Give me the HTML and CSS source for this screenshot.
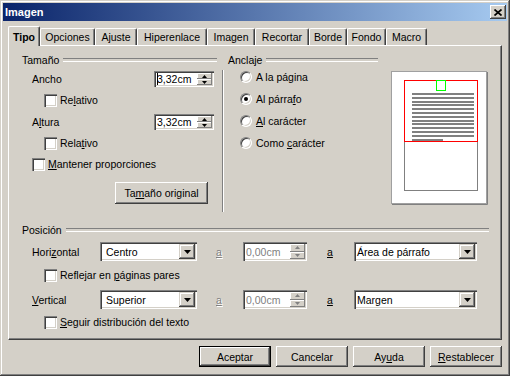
FILE: index.html
```html
<!DOCTYPE html>
<html>
<head>
    <meta charset="utf-8">
    <title>Imagen</title>
    <link rel="stylesheet" href="styles.css">
</head>
<body>
<div class="window">
    <div class="titlebar">
        <span class="title">Imagen</span>
        <button class="close-btn">
            <svg width="8" height="7" viewBox="0 0 8 7"><path d="M0.5 0.5 L7.5 6.5 M7.5 0.5 L0.5 6.5" stroke="#000" stroke-width="1.7"/></svg>
        </button>
    </div>

    <div class="content">
        <div class="tabs">
            <div class="tab active">Tipo</div>
            <div class="tab">Opciones</div>
            <div class="tab">Ajuste</div>
            <div class="tab">Hiperenlace</div>
            <div class="tab">Imagen</div>
            <div class="tab">Recortar</div>
            <div class="tab">Borde</div>
            <div class="tab">Fondo</div>
            <div class="tab">Macro</div>
        </div>

        <div class="panel">
            <div class="top-section">
                <div class="size-col">
                    <div class="header">Tamaño</div>
                    <div class="field-row first">
                        <span>Ancho</span>
                        <div class="spin">
                            <span class="spin-text"><span class="caret"></span>3,32cm</span>
                            <div class="spin-buttons">
                                <div class="spin-btn"><svg width="5" height="3"><path d="M2.5 0 L5 3 L0 3 Z" fill="#000"/></svg></div>
                                <div class="spin-btn"><svg width="5" height="3"><path d="M0 0 L5 0 L2.5 3 Z" fill="#000"/></svg></div>
                            </div>
                        </div>
                    </div>
                    <div class="check-row indent">
                        <span class="check"></span><span>Re<u>l</u>ativo</span>
                    </div>
                    <div class="field-row">
                        <span>A<u>l</u>tura</span>
                        <div class="spin">
                            <span class="spin-text">3,32cm</span>
                            <div class="spin-buttons">
                                <div class="spin-btn"><svg width="5" height="3"><path d="M2.5 0 L5 3 L0 3 Z" fill="#000"/></svg></div>
                                <div class="spin-btn"><svg width="5" height="3"><path d="M0 0 L5 0 L2.5 3 Z" fill="#000"/></svg></div>
                            </div>
                        </div>
                    </div>
                    <div class="check-row indent">
                        <span class="check"></span><span>Rela<u>t</u>ivo</span>
                    </div>
                    <div class="check-row keep">
                        <span class="check"></span><span><u>M</u>antener proporciones</span>
                    </div>
                    <button class="btn original-btn">Ta<u>m</u>año original</button>
                </div>

                <div class="vsep"></div>

                <div class="anchor-col">
                    <div class="header">Anclaje</div>
                    <div class="radio-row first">
                        <span class="radio"></span><span>A la página</span>
                    </div>
                    <div class="radio-row">
                        <span class="radio checked"></span><span>Al párra<u>f</u>o</span>
                    </div>
                    <div class="radio-row">
                        <span class="radio"></span><span><u>A</u>l carácter</span>
                    </div>
                    <div class="radio-row">
                        <span class="radio"></span><span>Como <u>c</u>arácter</span>
                    </div>
                </div>

                <div class="preview">
                    <svg width="97" height="134" viewBox="0 0 97 134">
                        <rect x="0.5" y="0.5" width="95" height="132" fill="#fff" stroke="#a0a0a0"/>
                        <path d="M96.5 1 V133.5 H1" stroke="#808080" fill="none"/>
                        <rect x="13.5" y="9.5" width="73" height="110" fill="#fff" stroke="#808080"/>
                        <g fill="#808080">
                            <rect x="21" y="22" width="62" height="2"/>
                            <rect x="21" y="26" width="62" height="2"/>
                            <rect x="21" y="30" width="62" height="2"/>
                            <rect x="21" y="33" width="62" height="2"/>
                            <rect x="21" y="37" width="62" height="2"/>
                            <rect x="21" y="41" width="62" height="2"/>
                            <rect x="21" y="45" width="62" height="2"/>
                            <rect x="21" y="49" width="62" height="2"/>
                            <rect x="21" y="52" width="62" height="2"/>
                            <rect x="21" y="56" width="62" height="2"/>
                            <rect x="21" y="60" width="62" height="2"/>
                            <rect x="21" y="64" width="62" height="2"/>
                            <rect x="21" y="68" width="31" height="2"/>
                        </g>
                        <rect x="13.5" y="9.5" width="73" height="61" fill="none" stroke="#ff0000"/>
                        <rect x="45.5" y="9.5" width="9" height="10" fill="none" stroke="#00ff00"/>
                    </svg>
                </div>
            </div>

            <div class="position">
                <div class="header">Posición</div>
                <div class="pos-row first">
                    <span class="pos-label">Hori<u>z</u>ontal</span>
                    <div class="select left-select">
                        <span class="select-text">Centro</span>
                        <div class="select-btn"><svg width="7" height="4"><path d="M0 0 L7 0 L3.5 4 Z" fill="#000"/></svg></div>
                    </div>
                    <span class="to-label disabled"><u>a</u></span>
                    <div class="spin pos-spin disabled">
                        <span class="spin-text">0,00cm</span>
                        <div class="spin-buttons">
                            <div class="spin-btn"><svg width="5" height="3"><path d="M2.5 0 L5 3 L0 3 Z" fill="#808080"/></svg></div>
                            <div class="spin-btn"><svg width="5" height="3"><path d="M0 0 L5 0 L2.5 3 Z" fill="#808080"/></svg></div>
                        </div>
                    </div>
                    <span class="to-label second"><u>a</u></span>
                    <div class="select right-select">
                        <span class="select-text">Área de párrafo</span>
                        <div class="select-btn"><svg width="7" height="4"><path d="M0 0 L7 0 L3.5 4 Z" fill="#000"/></svg></div>
                    </div>
                </div>
                <div class="check-row indent mirror">
                    <span class="check"></span><span>Reflejar en <u>p</u>áginas pares</span>
                </div>
                <div class="pos-row vertical">
                    <span class="pos-label"><u>V</u>ertical</span>
                    <div class="select left-select">
                        <span class="select-text">Superior</span>
                        <div class="select-btn"><svg width="7" height="4"><path d="M0 0 L7 0 L3.5 4 Z" fill="#000"/></svg></div>
                    </div>
                    <span class="to-label disabled"><u>a</u></span>
                    <div class="spin pos-spin disabled">
                        <span class="spin-text">0,00cm</span>
                        <div class="spin-buttons">
                            <div class="spin-btn"><svg width="5" height="3"><path d="M2.5 0 L5 3 L0 3 Z" fill="#808080"/></svg></div>
                            <div class="spin-btn"><svg width="5" height="3"><path d="M0 0 L5 0 L2.5 3 Z" fill="#808080"/></svg></div>
                        </div>
                    </div>
                    <span class="to-label second"><u>a</u></span>
                    <div class="select right-select">
                        <span class="select-text">Margen</span>
                        <div class="select-btn"><svg width="7" height="4"><path d="M0 0 L7 0 L3.5 4 Z" fill="#000"/></svg></div>
                    </div>
                </div>
                <div class="check-row indent follow">
                    <span class="check"></span><span><u>S</u>eguir distribución del texto</span>
                </div>
            </div>
        </div>

        <div class="button-bar">
            <button class="btn default">Aceptar</button>
            <button class="btn">Cancelar</button>
            <button class="btn">Ay<u>u</u>da</button>
            <button class="btn"><u>R</u>establecer</button>
        </div>
    </div>
</div>
</body>
</html>
```

FILE: styles.css
```css
* {
    box-sizing: border-box;
}

body {
    margin: 0;
    background: #D4D0C8;
    font-family: "Liberation Sans", Arial, sans-serif;
    font-size: 10.5px;
    color: #000;
}

u {
    text-decoration: underline;
    text-underline-offset: 1px;
}

.window {
    width: 510px;
    height: 376px;
    padding: 3px;
    background: #D4D0C8;
    box-shadow: inset -1px -1px #404040, inset 1px 1px #D4D0C8,
                inset -2px -2px #808080, inset 2px 2px #fff;
}

/* title bar */
.titlebar {
    height: 18px;
    display: flex;
    align-items: center;
    justify-content: space-between;
    padding: 0 1px 0 2px;
    background: linear-gradient(90deg, #0A246A 0%, #A6CAF0 100%);
}

.title {
    color: #fff;
    font-weight: bold;
    font-size: 11px;
}

.close-btn {
    width: 16px;
    height: 14px;
    padding: 0;
    border: none;
    background: #D4D0C8;
    display: flex;
    align-items: center;
    justify-content: center;
    box-shadow: inset -1px -1px #404040, inset 1px 1px #fff,
                inset -2px -2px #808080, inset 2px 2px #D4D0C8;
}

.content {
    padding: 5px 5px 0;
}

/* tabs */
.tabs {
    display: flex;
    align-items: flex-end;
    height: 19px;
}

.tab {
    height: 17px;
    display: flex;
    align-items: center;
    justify-content: center;
    background: #D4D0C8;
    border-top: 1px solid #fff;
    border-left: 1px solid #fff;
    border-right: 1px solid #404040;
    border-radius: 2px 2px 0 0;
    box-shadow: inset -1px 0 #808080;
    white-space: nowrap;
}

.tab.active {
    height: 20px;
    margin-bottom: -1px;
    font-weight: bold;
    position: relative;
    z-index: 1;
}

.tab:nth-child(1) { width: 32px; }
.tab:nth-child(2) { width: 55px; }
.tab:nth-child(3) { width: 42px; }
.tab:nth-child(4) { width: 70px; }
.tab:nth-child(5) { width: 48px; }
.tab:nth-child(6) { width: 54px; }
.tab:nth-child(7) { width: 38px; }
.tab:nth-child(8) { width: 39px; }
.tab:nth-child(9) { width: 41px; }

/* panel */
.panel {
    height: 295px;
    background: #D4D0C8;
    border-top: 1px solid #fff;
    border-left: 1px solid #fff;
    border-right: 1px solid #404040;
    border-bottom: 1px solid #404040;
    box-shadow: inset -1px -1px #808080;
    padding: 6px 12px 0 13px;
}

.top-section {
    display: flex;
    height: 161px;
}

.header {
    height: 16px;
    display: flex;
    align-items: center;
}

.header::after {
    content: "";
    flex: 1;
    height: 2px;
    margin-left: 4px;
    border-top: 1px solid #808080;
    border-bottom: 1px solid #fff;
}

.size-col {
    width: 195px;
    display: flex;
    flex-direction: column;
}

.field-row {
    display: flex;
    align-items: center;
    height: 16px;
    padding-left: 10px;
    margin-top: 7px;
}

.field-row.first {
    margin-top: 3px;
}

.field-row .spin {
    margin-left: auto;
    margin-right: 3px;
}

.spin {
    width: 60px;
    height: 16px;
    padding: 2px;
    display: flex;
    align-items: center;
    background: #fff;
    box-shadow: inset 1px 1px #808080, inset 2px 2px #404040,
                inset -1px -1px #fff, inset -2px -2px #D4D0C8;
}

.spin-text {
    flex: 1;
    padding-left: 1px;
    white-space: nowrap;
}

.caret {
    display: inline-block;
    width: 1px;
    height: 12px;
    margin-right: -1px;
    background: #000;
    vertical-align: -2px;
}

.spin-buttons {
    width: 15px;
    height: 12px;
    display: flex;
    flex-direction: column;
}

.spin-btn {
    flex: 1;
    display: flex;
    align-items: center;
    justify-content: center;
    background: #D4D0C8;
    box-shadow: inset -1px -1px #808080, inset 1px 1px #fff;
}

.spin-btn svg {
    display: block;
}

.check-row {
    display: flex;
    align-items: center;
    height: 14px;
    margin-top: 7px;
}

.check-row.indent {
    padding-left: 22px;
    margin-top: 6px;
}

.check-row.keep {
    padding-left: 10px;
}

.check {
    width: 13px;
    height: 13px;
    margin-right: 3px;
    background: #fff;
    box-shadow: inset 1px 1px #808080, inset 2px 2px #404040,
                inset -1px -1px #fff, inset -2px -2px #D4D0C8;
}

.btn {
    height: 21px;
    padding: 0;
    border: none;
    background: #D4D0C8;
    font-family: inherit;
    font-size: inherit;
    color: #000;
    box-shadow: inset -1px -1px #404040, inset 1px 1px #fff,
                inset -2px -2px #808080, inset 2px 2px #D4D0C8;
}

.original-btn {
    width: 93px;
    height: 22px;
    margin: 11px 0 0 93px;
}

.vsep {
    width: 2px;
    height: 142px;
    margin: 18px 4px 0 5px;
    border-left: 1px solid #808080;
    border-right: 1px solid #fff;
}

/* anchor */
.anchor-col {
    width: 150px;
    display: flex;
    flex-direction: column;
}

.radio-row {
    display: flex;
    align-items: center;
    height: 14px;
    padding-left: 12px;
    margin-top: 8px;
}

.radio-row.first {
    margin-top: 2px;
}

.radio {
    width: 12px;
    height: 12px;
    margin-right: 4px;
    border-radius: 50%;
    background: #fff;
    border: 1px solid;
    border-color: #808080 #fff #fff #808080;
    box-shadow: inset 1px 1px #404040, inset -1px -1px #D4D0C8;
    display: flex;
    align-items: center;
    justify-content: center;
}

.radio.checked::after {
    content: "";
    width: 4px;
    height: 4px;
    border-radius: 50%;
    background: #000;
}

.preview {
    margin: 19px 0 0 13px;
}

.preview svg {
    display: block;
}

/* position */
.position {
    margin-top: 9px;
}

.pos-row {
    display: flex;
    align-items: center;
    height: 19px;
    padding-left: 10px;
    margin-top: 4px;
}

.pos-row.vertical {
    margin-top: 8px;
}

.check-row.mirror {
    margin-top: 7px;
}

.pos-label {
    width: 68px;
}

.select {
    height: 19px;
    padding: 2px;
    display: flex;
    align-items: center;
    background: #fff;
    box-shadow: inset 1px 1px #808080, inset 2px 2px #404040,
                inset -1px -1px #fff, inset -2px -2px #D4D0C8;
}

.left-select {
    width: 97px;
}

.left-select .select-text {
    padding-left: 4px;
}

.right-select {
    width: 123px;
}

.right-select .select-text {
    padding-left: 1px;
}

.select-text {
    flex: 1;
    white-space: nowrap;
}

.select-btn {
    width: 16px;
    height: 15px;
    display: flex;
    align-items: center;
    justify-content: center;
    background: #D4D0C8;
    box-shadow: inset -1px -1px #404040, inset 1px 1px #D4D0C8,
                inset -2px -2px #808080, inset 2px 2px #fff;
}

.select-btn svg {
    display: block;
}

.to-label {
    width: 27px;
    margin-left: 19px;
}

.to-label.second {
    margin-left: 20px;
}

.to-label.disabled {
    color: #808080;
    text-shadow: 1px 1px #fff;
}

.pos-spin {
    width: 64px;
    height: 19px;
}

.pos-spin .spin-buttons {
    height: 15px;
}

.spin.disabled .spin-text {
    color: #808080;
}

/* buttons */
.button-bar {
    display: flex;
    justify-content: flex-end;
    gap: 5px;
    margin-top: 6px;
}

.button-bar .btn {
    width: 72px;
}

.btn.default {
    border: 1px solid #000;
}
```
